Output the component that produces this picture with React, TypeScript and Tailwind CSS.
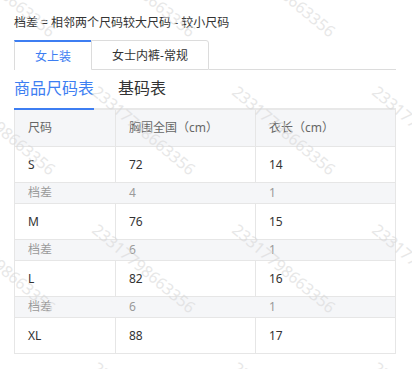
import React from "react";

const font = { fontFamily: '"Noto Sans", "Noto Sans CJK SC", sans-serif' };

type Row = { size: string; a: string; b: string; diff?: boolean };

const rows: Row[] = [
  { size: "S", a: "72", b: "14" },
  { size: "档差", a: "4", b: "1", diff: true },
  { size: "M", a: "76", b: "15" },
  { size: "档差", a: "6", b: "1", diff: true },
  { size: "L", a: "82", b: "16" },
  { size: "档差", a: "6", b: "1", diff: true },
  { size: "XL", a: "88", b: "17" },
];

const marks: { x: number; y: number }[] = [];
for (let j = 0; j < 4; j++) {
  for (let i = 0; i < 4; i++) {
    marks.push({ x: -40 + 140 * i, y: -55 + 138 * j });
  }
}

export default function App() {
  return (
    <div className="relative w-[412px] h-[369px] overflow-hidden bg-white" style={font}>
      <div className="pl-[14px] pr-[16px]">
        <div className="pt-[14px] h-[40px] text-[12px] leading-[18px] text-[#333]">
          档差 = 相邻两个尺码较大尺码 - 较小尺码
        </div>
        <div className="flex h-[30px]">
          <div className="w-[77px] h-[30px] border-t-2 border-t-[#3d7ef2] border-l border-l-[#dcdcdc] flex items-center justify-center text-[12px] text-[#3d7ef2] pt-[1px]">
            女上装
          </div>
          <div className="w-[118px] h-[30px] border border-[#dcdcdc] rounded-tr-[3px] flex items-center justify-center text-[12px] text-[#333] pt-[2px]">
            女士内裤-常规
          </div>
          <div className="flex-1 border-b border-b-[#dcdcdc]" />
        </div>
        <div className="flex gap-[24px] border-b-2 border-b-[#e8e8e8] h-[40px]">
          <div className="-mb-[2px] border-b-2 border-b-[#3d7ef2] pt-[6px] text-[16px] leading-[24px] text-[#3d7ef2]">
            商品尺码表
          </div>
          <div className="pt-[6px] text-[16px] leading-[24px] text-[#333]">基码表</div>
        </div>
        <div className="border-l border-r border-[#e6e6e6] text-[12px]">
          <div className="grid grid-cols-[101px_140px_1fr] h-[37px] bg-[#f5f6f8] border-b border-[#e6e6e6] text-[#666]">
            <div className="pl-[13px] flex items-center border-r border-[#e6e6e6]">尺码</div>
            <div className="pl-[13px] flex items-center border-r border-[#e6e6e6]">胸围全国（cm）</div>
            <div className="pl-[13px] flex items-center">衣长（cm）</div>
          </div>
          {rows.map((r, idx) => (
            <div
              key={idx}
              className={
                r.diff
                  ? "grid grid-cols-[101px_140px_1fr] h-[21px] bg-[#f5f6f8] border-b border-[#e6e6e6] text-[#9a9a9a]"
                  : "grid grid-cols-[101px_140px_1fr] h-[36px] bg-white border-b border-[#e6e6e6] text-[#333]"
              }
            >
              <div className={r.diff ? "pl-[13px] flex items-center" : "pl-[13px] flex items-center border-r border-[#e6e6e6]"}>{r.size}</div>
              <div className={r.diff ? "pl-[13px] flex items-center" : "pl-[13px] flex items-center border-r border-[#e6e6e6]"}>{r.a}</div>
              <div className="pl-[13px] flex items-center">{r.b}</div>
            </div>
          ))}
        </div>
      </div>
      {marks.map((m, i) => (
        <div
          key={i}
          className="absolute pointer-events-none text-[16px] leading-[16px] text-[#d8d8d8] opacity-60 whitespace-nowrap origin-top-left rotate-[40deg]"
          style={{ left: m.x, top: m.y }}
        >
          23317798663356
        </div>
      ))}
    </div>
  );
}
